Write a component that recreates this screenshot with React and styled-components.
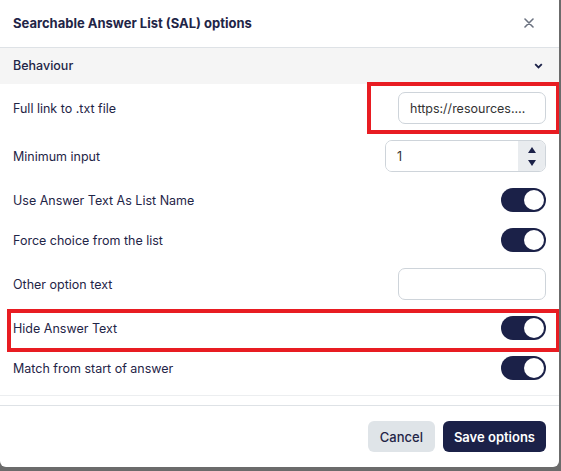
import styled, { createGlobalStyle } from "styled-components";

const GlobalStyle = createGlobalStyle`
  html, body {
    margin: 0;
    padding: 0;
    background: #6b6b6b;
    font-family: Inter, "Liberation Sans", sans-serif;
  }
`;

export default function App() {
  return (
    <>
      <GlobalStyle />
      <StyledModal>
        <StyledHeader>
          <StyledTitle>Searchable Answer List (SAL) options</StyledTitle>
          <StyledClose aria-label="Close">
            <svg width="10" height="10" viewBox="0 0 10 10">
              <path d="M1 1 L9 9 M9 1 L1 9" stroke="#6b7280" strokeWidth="1.6" strokeLinecap="round" />
            </svg>
          </StyledClose>
        </StyledHeader>

        <StyledSectionBar>
          <span>Behaviour</span>
          <svg width="9" height="6" viewBox="0 0 9 6">
            <path d="M1.2 1.2 L4.5 4.5 L7.8 1.2" fill="none" stroke="#1b2148" strokeWidth="1.8" />
          </svg>
        </StyledSectionBar>

        <StyledBody>
          <StyledRow>
            <StyledLabel>Full link to .txt file</StyledLabel>
            <StyledAnchor>
              <StyledTextInput $clip readOnly value="https://resources.sal-lists.com/answers.txt" />
              <StyledHighlight $top={-10} $right={-14} $bottom={-10} $left={-31} />
            </StyledAnchor>
          </StyledRow>

          <StyledRow>
            <StyledLabel>Minimum input</StyledLabel>
            <StyledNumberBox>
              <StyledNumberInput readOnly value="1" />
              <StyledStepper>
                <svg width="8" height="6" viewBox="0 0 8 6">
                  <path d="M4 0 L8 6 L0 6 Z" fill="#1b2148" />
                </svg>
                <svg width="8" height="6" viewBox="0 0 8 6">
                  <path d="M0 0 L8 0 L4 6 Z" fill="#1b2148" />
                </svg>
              </StyledStepper>
            </StyledNumberBox>
          </StyledRow>

          <StyledRow>
            <StyledLabel>Use Answer Text As List Name</StyledLabel>
            <StyledToggle />
          </StyledRow>

          <StyledRow>
            <StyledLabel>Force choice from the list</StyledLabel>
            <StyledToggle />
          </StyledRow>

          <StyledRow>
            <StyledLabel>Other option text</StyledLabel>
            <StyledTextInput readOnly value="" />
          </StyledRow>

          <StyledRow $relative>
            <StyledLabel>Hide Answer Text</StyledLabel>
            <StyledToggle />
            <StyledHighlight $top={-7} $right={-14} $bottom={-12} $left={-6} />
          </StyledRow>

          <StyledRow>
            <StyledLabel>Match from start of answer</StyledLabel>
            <StyledToggle />
          </StyledRow>
        </StyledBody>

        <StyledFooter>
          <StyledButtonCancel>Cancel</StyledButtonCancel>
          <StyledButtonSave>Save options</StyledButtonSave>
        </StyledFooter>
      </StyledModal>
    </>
  );
}

const StyledModal = styled.div`
  width: 559px;
  height: 467px;
  box-sizing: border-box;
  background: #fff;
  border-radius: 0 0 6px 6px;
  display: flex;
  flex-direction: column;
  color: #1f2547;
  overflow: hidden;
`;

const StyledHeader = styled.div`
  height: 49px;
  box-sizing: border-box;
  display: flex;
  align-items: center;
  justify-content: space-between;
  padding: 0 25px 0 13px;
  border-bottom: 1px solid #dee2e6;
`;

const StyledTitle = styled.h1`
  margin: 0;
  font-size: 13px;
  font-weight: 700;
  color: #1f2547;
`;

const StyledClose = styled.button`
  border: 0;
  background: none;
  padding: 0;
  display: flex;
  cursor: pointer;
`;

const StyledSectionBar = styled.div`
  height: 37px;
  display: flex;
  align-items: center;
  justify-content: space-between;
  padding: 0 16px 0 13px;
  background: #f5f5f5;
  font-size: 12.5px;
  font-weight: 500;
`;

const StyledBody = styled.div`
  display: flex;
  flex-direction: column;
  gap: 16px;
  padding: 8px 13px 15px;
  border-bottom: 1px solid #eceef0;
`;

const StyledRow = styled.div`
  display: flex;
  align-items: center;
  justify-content: space-between;
  position: ${(p) => (p.$relative ? "relative" : "static")};
`;

const StyledLabel = styled.span`
  font-size: 12.5px;
  color: #1f2547;
`;

const StyledAnchor = styled.div`
  position: relative;
  display: flex;
`;

const StyledHighlight = styled.div`
  position: absolute;
  top: ${(p) => p.$top}px;
  right: ${(p) => p.$right}px;
  bottom: ${(p) => p.$bottom}px;
  left: ${(p) => p.$left}px;
  border: 4px solid #e81c22;
  pointer-events: none;
`;

const StyledTextInput = styled.input`
  width: 148px;
  height: 32px;
  box-sizing: border-box;
  padding: 0 ${(p) => (p.$clip ? 17 : 11)}px 0 11px;
  border: 1px solid #ced4da;
  border-radius: 7px;
  font-family: Inter, "Liberation Sans", sans-serif;
  font-size: 12.5px;
  color: #333;
  text-overflow: ellipsis;
  outline: none;
`;

const StyledNumberBox = styled.div`
  width: 161px;
  height: 32px;
  box-sizing: border-box;
  display: flex;
  border: 1px solid #ced4da;
  border-radius: 7px;
  overflow: hidden;
`;

const StyledNumberInput = styled.input`
  flex: 1;
  min-width: 0;
  border: 0;
  padding: 0 11px;
  font-family: Inter, "Liberation Sans", sans-serif;
  font-size: 12.5px;
  color: #333;
  outline: none;
`;

const StyledStepper = styled.div`
  width: 27px;
  background: #e9ecef;
  display: flex;
  flex-direction: column;
  align-items: center;
  justify-content: center;
  gap: 7px;
`;

const StyledToggle = styled.span`
  width: 45px;
  height: 24px;
  box-sizing: border-box;
  border-radius: 12px;
  background: #1b2148;
  display: flex;
  align-items: center;
  justify-content: flex-end;
  padding-right: 2px;

  &::after {
    content: "";
    width: 20px;
    height: 20px;
    border-radius: 50%;
    background: #fff;
  }
`;

const StyledFooter = styled.div`
  margin-top: 9px;
  border-top: 1px solid #dee2e6;
  display: flex;
  justify-content: flex-end;
  gap: 8px;
  padding: 15px 13px;
`;

const StyledButtonCancel = styled.button`
  height: 31px;
  padding: 0 12px;
  border: 0;
  border-radius: 6px;
  background: #dfe4e8;
  color: #1f2547;
  font-family: Inter, "Liberation Sans", sans-serif;
  font-size: 13px;
  font-weight: 500;
`;

const StyledButtonSave = styled(StyledButtonCancel)`
  padding: 0 11px;
  background: #1b2148;
  color: #fff;
  font-weight: 600;
`;
